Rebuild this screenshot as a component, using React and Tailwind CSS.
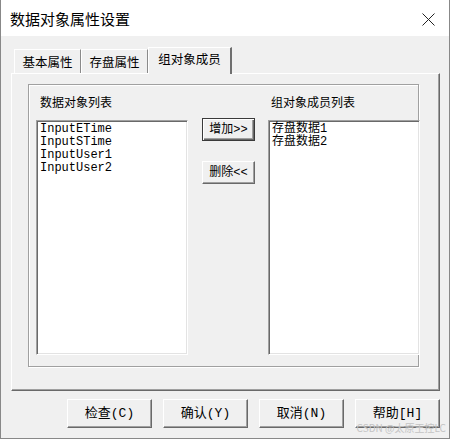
import React from "react";

const ui = { fontFamily: '"Noto Sans CJK SC", "Liberation Sans", sans-serif' };
const mono = { fontFamily: '"Liberation Mono", "Noto Sans CJK SC", monospace' };

const objects = ["InputETime", "InputSTime", "InputUser1", "InputUser2"];
const members = ["存盘数据1", "存盘数据2"];

// 经典 Windows 凸起按钮
const Btn = ({ children, isDefault, className = "" }) => (
  <div
    className={
      "flex items-center justify-center leading-[14px] text-black bg-[#f0f0f0] " +
      (isDefault
        ? "border border-[#3a3a3a] shadow-[inset_1px_1px_0_#ffffff,inset_-1px_-1px_0_#696969,inset_-2px_-2px_0_#a0a0a0] "
        : "border border-t-white border-l-white border-r-[#696969] border-b-[#696969] shadow-[inset_-1px_-1px_0_#a0a0a0] ") +
      className
    }
    style={mono}
  >
    {children}
  </div>
);

// 凹陷列表框
const ListBox = ({ items, className = "" }) => (
  <div
    className={
      "bg-white border border-t-[#a0a0a0] border-l-[#a0a0a0] border-r-white border-b-white shadow-[inset_1px_1px_0_#696969,inset_-1px_-1px_0_#e3e3e3] pl-[3px] pt-[2px] " +
      className
    }
  >
    {items.map((t) => (
      <div key={t} className="text-[12px] leading-[13px] text-black whitespace-nowrap" style={mono}>
        {t}
      </div>
    ))}
  </div>
);

const App = () => {
  return (
    <div className="w-[450px] h-[439px] bg-[#f0f0f0] border-x border-b border-[#888888] flex flex-col relative overflow-hidden">
      {/* Title bar */}
      <div className="h-[36px] bg-white flex items-center justify-between pl-[9px] pr-[14px] pt-[2px] shrink-0">
        <span className="text-[15px] text-black" style={ui}>
          数据对象属性设置
        </span>
        <svg width="13" height="13" viewBox="0 0 13 13">
          <path d="M0.5 0.5 L12.5 12.5 M12.5 0.5 L0.5 12.5" stroke="#222" strokeWidth="1" />
        </svg>
      </div>

      {/* Tabs */}
      <div className="flex items-end h-[26px] mt-[11px] ml-[13px] relative z-10">
        <div
          className="w-[67px] h-[24px] border-t border-l border-white border-r border-r-[#8a8a8a] flex items-center justify-center text-[12.5px] text-black pt-[2px]"
          style={ui}
        >
          基本属性
        </div>
        <div
          className="w-[67px] h-[24px] border-t border-l border-white border-r border-r-[#8a8a8a] flex items-center justify-center text-[12.5px] text-black pt-[2px]"
          style={ui}
        >
          存盘属性
        </div>
        <div
          className="w-[84px] h-[27px] -mb-[1px] bg-[#f0f0f0] border-t border-l border-white border-r-2 border-r-[#6f6f6f] flex items-center justify-center text-[12.5px] text-black pb-[3px]"
          style={ui}
        >
          组对象成员
        </div>
      </div>

      {/* Tab panel */}
      <div className="ml-[10px] w-[429px] h-[318px] border-t border-l border-white border-r border-b border-r-[#696969] border-b-[#696969] shadow-[inset_-1px_-1px_0_#a0a0a0] pt-[10px] pl-[16px]">
        {/* Group box */}
        <div className="w-[391px] h-[283px] border border-[#a0a0a0] shadow-[inset_1px_1px_0_#ffffff,1px_1px_0_#ffffff] flex flex-col">
          <div className="flex mt-[9px] h-[16px] text-[12px] leading-[16px] text-black" style={ui}>
            <span className="ml-[11px] w-[231px]">数据对象列表</span>
            <span>组对象成员列表</span>
          </div>
          <div className="flex items-start mt-[8px] ml-[7px]">
            <ListBox items={objects} className="w-[152px] h-[235px] mt-[2px] shrink-0" />
            <div className="flex flex-col gap-[20px] ml-[14px] w-[53px] shrink-0">
              <Btn isDefault className="h-[23px] text-[12px]">增加&gt;&gt;</Btn>
              <Btn className="h-[23px] text-[12px]">删除&lt;&lt;</Btn>
            </div>
            <ListBox items={members} className="w-[152px] h-[235px] mt-[2px] ml-[13px] shrink-0" />
          </div>
        </div>
      </div>

      {/* Bottom buttons */}
      <div className="flex justify-end gap-[11px] mt-[8px] pr-[9px]">
        <Btn className="w-[85px] h-[29px] text-[13px]">检查(C)</Btn>
        <Btn className="w-[85px] h-[29px] text-[13px]">确认(Y)</Btn>
        <Btn className="w-[85px] h-[29px] text-[13px]">取消(N)</Btn>
        <Btn className="w-[85px] h-[29px] text-[13px]">帮助[H]</Btn>
      </div>

      {/* Watermark */}
      <div
        className="absolute right-[3px] bottom-[5px] text-[10px] leading-[10px] text-[#c4c4c4]"
        style={ui}
      >
        CSDN @太原王控LC
      </div>
    </div>
  );
};

export default App;
